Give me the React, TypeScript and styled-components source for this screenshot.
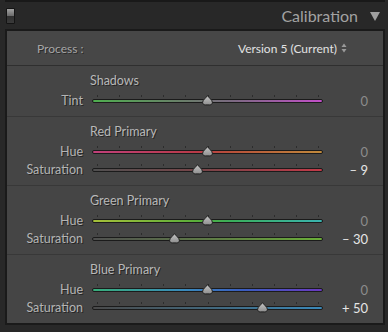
import React from "react";
import styled, { createGlobalStyle } from "styled-components";

const Global = createGlobalStyle`
  html, body { margin: 0; padding: 0; background: #282828; }
  body { font-family: Lato, "Open Sans", sans-serif; -webkit-font-smoothing: antialiased; }
`;

const Root = styled.div`
  width: 388px;
  height: 332px;
  background: #282828;
  overflow: hidden;
`;

const PrevEdge = styled.div`
  margin-left: 5px;
  width: 376px;
  height: 0;
  border: 2px solid #191919;
  border-top: none;
`;

const Header = styled.div`
  height: 27px;
  display: flex;
  align-items: center;
  padding: 0 8px 0 6px;
  gap: 12px;
`;

const Toggle = styled.div`
  width: 7px;
  height: 14px;
  border: 1px solid #141414;
  background: linear-gradient(#a2a2a2 0%, #6a6a6a 50%, #303030 50%, #3a3a3a 100%);
  border-radius: 1px;
`;

const Title = styled.div`
  margin-left: auto;
  font-size: 16px;
  color: #a2a2a2;
  line-height: 20px;
`;

const Caret = styled.div`
  width: 0;
  height: 0;
  border-left: 5px solid transparent;
  border-right: 5px solid transparent;
  border-top: 9px solid #a0a0a0;
  margin-top: 1px;
`;

const Panel = styled.div`
  margin-left: 5px;
  width: 376px;
  border: 2px solid #1a1a1a;
  background: #454545;
`;

const ProcessRow = styled.div`
  height: 34px;
  display: flex;
  align-items: center;
  padding-left: 30px;
  border-bottom: 1px solid #2f2f2f;
  background: #474747;
`;

const ProcessLabel = styled.span`
  font-size: 12px;
  color: #a6a6a6;
  text-shadow: 1px 1px 0 #2a2a2a;
`;

const ProcessValue = styled.span`
  margin-left: auto;
  margin-right: 36px;
  font-size: 12px;
  color: #e2e2e2;
  display: flex;
  align-items: center;
  gap: 4px;
`;

const Section = styled.div<{ $last?: boolean }>`
  display: grid;
  grid-template-columns: 76px 231px 1fr;
  column-gap: 9px;
  padding: 7px 0 6px;
  border-bottom: ${(p) => (p.$last ? "none" : "1px solid #383838")};
`;

const SectionTitle = styled.div`
  grid-column: 2;
  margin-left: -2px;
  height: 16px;
  line-height: 16px;
  margin-bottom: 3px;
  font-size: 12.5px;
  color: #b8b8b8;
  text-shadow: 1px 1px 0 #262626;
`;

const Label = styled.div`
  grid-column: 1;
  height: 18px;
  line-height: 18px;
  text-align: right;
  font-size: 12.5px;
  color: #b4b4b4;
  text-shadow: 1px 1px 0 #262626;
`;

const Value = styled.div<{ $zero: boolean }>`
  grid-column: 3;
  height: 18px;
  line-height: 18px;
  text-align: right;
  padding-right: 15px;
  font-size: 13px;
  color: ${(p) => (p.$zero ? "#8c8c8c" : "#e6e6e6")};
  white-space: pre;
`;

const TrackCell = styled.div`
  grid-column: 2;
  height: 18px;
  position: relative;
`;

const Track = styled.div<{ $grad: string }>`
  position: absolute;
  left: 0;
  right: 0;
  top: 7px;
  height: 2px;
  border: 1px solid #1b1b1b;
  border-radius: 2px;
  background: ${(p) => p.$grad};
`;

const Tick = styled.div`
  position: absolute;
  top: 3px;
  width: 1px;
  height: 2px;
  background: #2c2c2c;
`;

const ThumbSvg = styled.svg`
  position: absolute;
  top: 3px;
  width: 11px;
  height: 11px;
  margin-left: -5.5px;
`;

type SliderDef = { label: string; value: number; grad: string };
type SectionDef = { title: string; sliders: SliderDef[] };

const sections: SectionDef[] = [
  {
    title: "Shadows",
    sliders: [
      { label: "Tint", value: 0, grad: "linear-gradient(90deg, #4fae4f 0%, #6a7d6a 40%, #7a6a80 60%, #c24fc8 100%)" },
    ],
  },
  {
    title: "Red Primary",
    sliders: [
      { label: "Hue", value: 0, grad: "linear-gradient(90deg, #c0407a 0%, #b83a48 45%, #b8503a 60%, #c08a3c 100%)" },
      { label: "Saturation", value: -9, grad: "linear-gradient(90deg, #505050 0%, #7a4448 50%, #c23a48 100%)" },
    ],
  },
  {
    title: "Green Primary",
    sliders: [
      { label: "Hue", value: 0, grad: "linear-gradient(90deg, #a6c03a 0%, #5aae3a 45%, #3aae5a 60%, #3ab4b0 100%)" },
      { label: "Saturation", value: -30, grad: "linear-gradient(90deg, #505050 0%, #5e7a46 50%, #6aae38 100%)" },
    ],
  },
  {
    title: "Blue Primary",
    sliders: [
      { label: "Hue", value: 0, grad: "linear-gradient(90deg, #38ae7a 0%, #3a8abc 40%, #3a5ec0 65%, #6a3ac0 100%)" },
      { label: "Saturation", value: 50, grad: "linear-gradient(90deg, #4a4a4a 0%, #42667a 50%, #3a88b8 100%)" },
    ],
  },
];

const TICKS = Array.from({ length: 11 }, (_, i) => 5 + i * 22.1);

const fmt = (v: number) => (v === 0 ? "0" : v < 0 ? `\u2013 ${-v}` : `+ ${v}`);

const SliderRow = ({ s, id }: { s: SliderDef; id: string }) => {
  const x = 115.5 + s.value * 1.105;
  return (
    <>
      <Label>{s.label}</Label>
      <TrackCell>
        {TICKS.map((t) => (
          <Tick key={t} style={{ left: Math.round(t) }} />
        ))}
        <Track $grad={s.grad} />
        <ThumbSvg viewBox="0 0 11 11" style={{ left: x }}>
          <defs>
            <linearGradient id={id} x1="0" y1="0" x2="0" y2="1">
              <stop offset="0" stopColor="#c6c6c6" />
              <stop offset="1" stopColor="#8e8e8e" />
            </linearGradient>
          </defs>
          <path
            d="M5.5 0.6 C6.6 2.6 10.4 5 10.4 7.3 C10.4 9 9.2 9.9 7.6 9.9 L3.4 9.9 C1.8 9.9 0.6 9 0.6 7.3 C0.6 5 4.4 2.6 5.5 0.6 Z"
            fill={`url(#${id})`}
            stroke="#1c1c1c"
            strokeWidth="1"
          />
        </ThumbSvg>
      </TrackCell>
      <Value $zero={s.value === 0}>{fmt(s.value)}</Value>
    </>
  );
};

const Arrows = () => (
  <svg width="6" height="10" viewBox="0 0 6 10">
    <path d="M3 0.5 L5.5 4 L0.5 4 Z" fill="#9a9a9a" />
    <path d="M3 9.5 L5.5 6 L0.5 6 Z" fill="#9a9a9a" />
  </svg>
);

export default function App() {
  return (
    <Root>
      <Global />
      <PrevEdge />
      <Header>
        <Toggle />
        <Title>Calibration</Title>
        <Caret />
      </Header>
      <Panel>
        <ProcessRow>
          <ProcessLabel>Process :</ProcessLabel>
          <ProcessValue>
            Version 5 (Current) <Arrows />
          </ProcessValue>
        </ProcessRow>
        {sections.map((sec, i) => (
          <Section key={sec.title} $last={i === sections.length - 1}>
            <SectionTitle>{sec.title}</SectionTitle>
            {sec.sliders.map((s, j) => (
              <SliderRow key={s.label} s={s} id={`tg${i}${j}`} />
            ))}
          </Section>
        ))}
      </Panel>
    </Root>
  );
}
